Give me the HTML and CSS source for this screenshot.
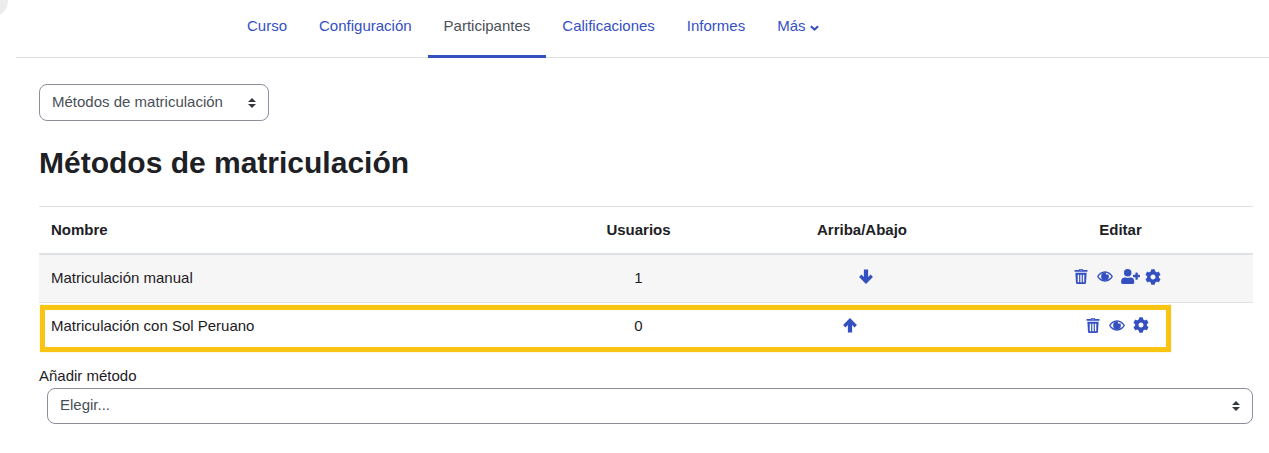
FILE: index.html
```html
<!DOCTYPE html>
<html lang="es">
<head>
<meta charset="utf-8">
<title>Métodos de matriculación</title>
<link rel="stylesheet" href="styles.css">
</head>
<body>
<svg width="0" height="0" class="defs" aria-hidden="true">
  <symbol id="i-trash" viewBox="0 0 448 512"><path fill-rule="evenodd" d="M160 0h128l12 32h132a16 16 0 0 1 16 16v32a16 16 0 0 1-16 16H16A16 16 0 0 1 0 80V48a16 16 0 0 1 16-16h132zM176 24l-6 16h108l-6-16zM32 128h384l-21 339a48 48 0 0 1-48 45H101a48 48 0 0 1-48-45zM112 192v256h48V192zM200 192v256h48V192zM288 192v256h48V192z"/></symbol>
  <symbol id="i-eye" viewBox="0 0 576 512"><path fill-rule="evenodd" d="M288 70C160 70 56 155 0 256c56 101 160 186 288 186s232-85 288-186C520 155 416 70 288 70zM288 124c96 0 180 56 232 132-52 76-136 132-232 132S108 332 56 256C108 180 192 124 288 124z"/><path d="M288 116a140 140 0 1 0 140 140c0-34-12-64-32-88a40 40 0 1 1-70-44 140 140 0 0 0-38-8z"/></symbol>
  <symbol id="i-user-plus" viewBox="0 0 640 512"><path d="M624 200h-56v-64a20 20 0 0 0-20-20h-40a20 20 0 0 0-20 20v64h-64a20 20 0 0 0-20 20v40a20 20 0 0 0 20 20h64v64a20 20 0 0 0 20 20h40a20 20 0 0 0 20-20v-64h56a20 20 0 0 0 16-20v-40a20 20 0 0 0-16-20zM224 256a128 128 0 1 0-128-128 128 128 0 0 0 128 128zm89.600 32h-16.700a174.100 174.100 0 0 1-145.800 0h-16.700A134.400 134.400 0 0 0 0 422.400V464a48 48 0 0 0 48 48h352a48 48 0 0 0 48-48v-41.600A134.400 134.400 0 0 0 313.600 288z"/></symbol>
  <symbol id="i-cog" viewBox="0 0 512 512"><path d="M487.400 315.700l-42.600-24.600c4.300-23.200 4.300-47 0-70.200l42.600-24.600c4.900-2.800 7.100-8.600 5.500-14-11.100-35.600-30-67.800-54.700-94.600-3.800-4.100-10-5.100-14.800-2.300L380.800 110c-17.900-15.400-38.500-27.300-60.800-35.100V25.800c0-5.600-3.900-10.500-9.400-11.700-36.700-8.200-74.300-7.800-109.200 0-5.500 1.200-9.400 6.100-9.400 11.700V75c-22.200 7.900-42.800 19.800-60.800 35.100L88.700 85.500c-4.900-2.800-11-1.900-14.800 2.300-24.700 26.700-43.600 58.900-54.700 94.600-1.700 5.400.6 11.200 5.500 14L67.300 221c-4.300 23.200-4.300 47 0 70.200l-42.600 24.600c-4.900 2.800-7.100 8.600-5.500 14 11.100 35.600 30 67.800 54.700 94.600 3.800 4.100 10 5.100 14.800 2.300l42.600-24.600c17.900 15.400 38.500 27.300 60.800 35.100v49.200c0 5.600 3.900 10.500 9.400 11.700 36.700 8.200 74.300 7.800 109.200 0 5.500-1.200 9.400-6.100 9.400-11.700v-49.200c22.200-7.900 42.800-19.800 60.800-35.100l42.600 24.600c4.900 2.800 11 1.900 14.800-2.300 24.700-26.700 43.600-58.900 54.700-94.600 1.500-5.500-.7-11.300-5.600-14.100zM256 336c-44.100 0-80-35.900-80-80s35.900-80 80-80 80 35.900 80 80-35.900 80-80 80z"/></symbol>
  <symbol id="i-down" viewBox="-.5 -.5 15 15"><path d="M5 0h4v7l2.300-2.300 2.200 2.200L7 13.500.5 6.900 2.700 4.700 5 7z"/></symbol>
  <symbol id="i-up" viewBox="-.5 -.5 15 15"><path d="M5 14h4V7l2.300 2.300 2.200-2.200L7 .5.5 7.100 2.700 9.300 5 7z"/></symbol>
</svg>

<div class="corner"></div>

<nav class="tabs">
  <a class="tab" href="#">Curso</a>
  <a class="tab" href="#">Configuración</a>
  <a class="tab tab-active" href="#">Participantes</a>
  <a class="tab" href="#">Calificaciones</a>
  <a class="tab" href="#">Informes</a>
  <a class="tab" href="#">Más <svg class="caret" viewBox="0 0 10 6"><path d="M1 1l4 3.600L9 1" fill="none" stroke="currentColor" stroke-width="2.400"/></svg></a>
</nav>

<main class="content">
  <div class="select select-nav">
    <span>Métodos de matriculación</span>
    <svg class="updown" viewBox="0 0 8 10"><path d="M4 0l4 4H0zM4 10L0 6h8z"/></svg>
  </div>

  <h1 class="title">Métodos de matriculación</h1>

  <table class="methods">
    <thead>
      <tr>
        <th class="c-name">Nombre</th>
        <th class="c-users">Usuarios</th>
        <th class="c-move">Arriba/Abajo</th>
        <th class="c-edit">Editar</th>
      </tr>
    </thead>
    <tbody>
      <tr class="odd">
        <td class="c-name">Matriculación manual</td>
        <td class="c-users">1</td>
        <td class="c-move"><span class="icons"><span class="spacer"></span><a class="ic" href="#"><svg class="arrow"><use href="#i-down"/></svg></a></span></td>
        <td class="c-edit"><span class="icons">
          <a class="ic" href="#"><svg><use href="#i-trash"/></svg></a>
          <a class="ic" href="#"><svg><use href="#i-eye"/></svg></a>
          <a class="ic" href="#"><svg class="wide"><use href="#i-user-plus"/></svg></a>
          <a class="ic" href="#"><svg class="cog"><use href="#i-cog"/></svg></a>
        </span></td>
      </tr>
      <tr>
        <td class="c-name">Matriculación con Sol Peruano</td>
        <td class="c-users">0</td>
        <td class="c-move"><span class="icons"><a class="ic" href="#"><svg class="arrow"><use href="#i-up"/></svg></a><span class="spacer"></span></span></td>
        <td class="c-edit"><span class="icons">
          <a class="ic" href="#"><svg><use href="#i-trash"/></svg></a>
          <a class="ic" href="#"><svg><use href="#i-eye"/></svg></a>
          <a class="ic" href="#"><svg class="cog"><use href="#i-cog"/></svg></a>
        </span></td>
      </tr>
    </tbody>
  </table>

  <div class="add">
    <label class="add-label">Añadir método</label>
    <div class="select select-add">
      <span>Elegir...</span>
      <svg class="updown" viewBox="0 0 8 10"><path d="M4 0l4 4H0zM4 10L0 6h8z"/></svg>
    </div>
  </div>
  <div class="highlight"></div>
</main>
</body>
</html>
```
FILE: styles.css
```css
* { box-sizing: border-box; }
html, body { margin: 0; padding: 0; }
body {
  position: relative;
  height: 453px;
  overflow: hidden;
  background: #fff;
  color: #1d2125;
  font-family: "Liberation Sans", Arial, sans-serif;
  font-size: 15px;
  line-height: 22.5px;
}
.defs { position: absolute; }
.corner {
  position: absolute;
  left: -14px;
  top: -15px;
  width: 22px;
  height: 30px;
  border-radius: 50%;
  background: #ececec;
}
.tabs {
  display: flex;
  height: 58px;
  margin-left: 16px;
  padding-left: 215px;
  border-bottom: 1px solid #dee2e6;
}
.tab {
  display: block;
  height: 58px;
  padding: 15px 16px 0;
  color: #3450c4;
  text-decoration: none;
}
.tab-active {
  color: #495057;
  border-bottom: 3px solid #3450c0;
}
.caret { width: 9px; height: 6px; }
.content {
  position: relative;
  padding: 26px 16px 0 39px;
}
.select {
  display: flex;
  align-items: center;
  justify-content: space-between;
  padding: 0 12px;
  border: 1px solid #8e8e9e;
  border-radius: 8px;
  background: #fff;
  color: #495057;
}
.updown { width: 8px; height: 10px; fill: #343a40; }
.select-nav { width: 230px; height: 37px; }
.title {
  margin: 24px 0 0;
  font-size: 30px;
  line-height: 36px;
  font-weight: 700;
  color: #1d2125;
}
.methods {
  width: 1214px;
  margin-top: 25px;
  border-collapse: collapse;
  table-layout: fixed;
}
.methods th {
  height: 47px;
  padding: 0 12px;
  font-weight: 700;
  border-top: 1px solid #dee2e6;
  border-bottom: 2px solid #dee2e6;
}
.methods td {
  height: 49px;
  padding: 12px 12px 0;
  vertical-align: top;
  border-top: 1px solid #dee2e6;
}
.odd td { background: #f6f6f6; }
.c-name { width: 502px; text-align: left; }
.c-users { width: 195px; text-align: center; }
.c-move { width: 252px; text-align: center; }
.c-edit { width: 265px; text-align: center; }
.icons {
  display: inline-flex;
  align-items: center;
  height: 20px;
  vertical-align: top;
}
.ic {
  display: flex;
  justify-content: flex-start;
  width: 16px;
  margin-right: 8px;
}
.ic svg {
  flex: none;
  width: 16px;
  height: 15px;
  fill: #3450c0;
}
.ic svg.arrow { height: 16px; }
.ic svg.cog { height: 16px; }
.ic svg.wide { width: 19px; height: 15px; }
.spacer { width: 16px; }
.add { margin-top: 13px; }
.add-label { display: block; height: 23px; }
.select-add {
  width: 1206px;
  height: 36px;
  margin-left: 8px;
}
.highlight {
  position: absolute;
  left: 40px;
  top: 247px;
  width: 1131px;
  height: 47px;
  border: 5px solid #f9c412;
  box-shadow: 0 0 1px rgba(249, 196, 18, .6);
  pointer-events: none;
}
```
